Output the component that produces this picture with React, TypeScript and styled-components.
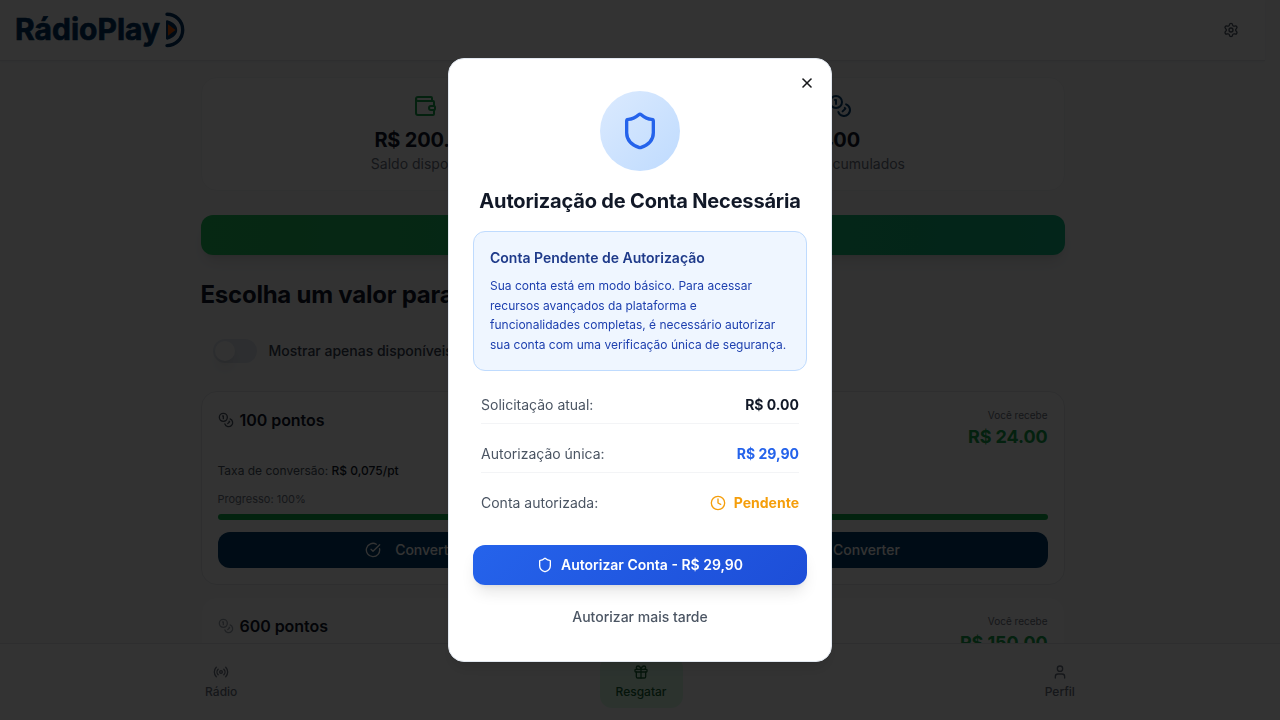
import React from "react";
import styled, { createGlobalStyle } from "styled-components";
import {
  CircleCheckBig,
  Clock,
  Coins,
  Gift,
  Radio,
  Settings,
  Shield,
  User,
  Wallet,
  X,
} from "lucide-react";

const GlobalStyle = createGlobalStyle`
  *, *::before, *::after { box-sizing: border-box; }
  html, body { margin: 0; height: 100%; overflow: hidden; }
  body {
    background: #f9fafb;
    color: #0f172a;
    font-family: Inter, "Liberation Sans", sans-serif;
    font-size: 14px;
    line-height: 20px;
  }
  h1, h2, h3, p { margin: 0; }
  button { font: inherit; border: 0; padding: 0; background: none; color: inherit; cursor: pointer; }
  svg { flex-shrink: 0; }
`;

const Page = styled.div`
  height: 720px;
  overflow: hidden;
  padding-right: 15px;
`;

const Header = styled.header`
  display: flex;
  align-items: center;
  justify-content: space-between;
  height: 61px;
  padding: 0 26px 0 16px;
  background: #fff;
  border-bottom: 1px solid #e5e7eb;
  box-shadow: 0 1px 2px rgba(0, 0, 0, 0.05);
`;

const IconButton = styled.button`
  display: flex;
  padding: 0;
  color: #4b5563;
`;

const Main = styled.main`
  display: flex;
  flex-direction: column;
  max-width: 896px;
  margin: 0 auto;
  padding: 16px;
`;

const Summary = styled.section`
  display: grid;
  grid-template-columns: 1fr 1fr;
  padding: 16px;
  background: #fff;
  border: 1px solid #f1f3f5;
  border-radius: 16px;
`;

const Stat = styled.div<{ $tone: string }>`
  display: flex;
  flex-direction: column;
  align-items: center;
  color: #6b7280;
  svg {
    color: ${(p) => p.$tone};
    margin-bottom: 8px;
  }
  strong {
    font-size: 20px;
    line-height: 28px;
    font-weight: 700;
    letter-spacing: -0.01em;
    color: #0f172a;
  }
`;

const WithdrawButton = styled.button`
  height: 40px;
  margin-top: 24px;
  border-radius: 12px;
  background: linear-gradient(to right, #22c55e, #10b981);
  box-shadow: 0 10px 15px -3px rgba(0, 0, 0, 0.1), 0 4px 6px -4px rgba(0, 0, 0, 0.1);
  color: #fff;
  font-weight: 600;
`;

const SectionTitle = styled.h2`
  margin-top: 24px;
  font-size: 24px;
  line-height: 32px;
  font-weight: 700;
  letter-spacing: -0.01em;
`;

const FilterRow = styled.label`
  display: flex;
  align-items: center;
  gap: 12px;
  margin: 16px 0;
  padding: 12px;
  font-weight: 500;
  color: #374151;
`;

const Track = styled.span`
  display: flex;
  width: 44px;
  height: 24px;
  padding: 2px;
  border-radius: 12px;
  background: #dfe5ee;
`;

const Knob = styled.span`
  width: 20px;
  height: 20px;
  border-radius: 50%;
  background: #f9fafb;
  box-shadow: 0 10px 15px -3px rgba(0, 0, 0, 0.1), 0 4px 6px -4px rgba(0, 0, 0, 0.1);
`;

const CardList = styled.div`
  display: flex;
  flex-direction: column;
  gap: 12px;
`;

const Card = styled.article<{ $muted?: boolean }>`
  padding: 16px;
  border: 1px solid ${(p) => (p.$muted ? "#f8f9fa" : "#e5e7eb")};
  border-radius: 16px;
  background: #fff;
`;

const CardTop = styled.div`
  display: flex;
  justify-content: space-between;
  align-items: flex-start;
`;

const Points = styled.h3<{ $muted?: boolean }>`
  display: flex;
  align-items: center;
  gap: 6px;
  font-size: 16px;
  line-height: 24px;
  font-weight: 600;
  letter-spacing: -0.05px;
  svg {
    color: ${(p) => (p.$muted ? "#9ca3af" : "#4b5563")};
  }
`;

const Receive = styled.div`
  text-align: right;
  small {
    display: block;
    font-size: 10px;
    line-height: 15px;
    color: #6b7280;
  }
  strong {
    display: block;
    font-size: 18px;
    line-height: 28px;
    font-weight: 700;
    letter-spacing: -0.1px;
    color: #16a34a;
  }
`;

const Rate = styled.p`
  margin-top: 12px;
  font-size: 12px;
  line-height: 16px;
  color: #4b5563;
  b {
    font-weight: 500;
    color: #0f172a;
  }
`;

const ProgressLabel = styled.p`
  margin: 12px 0 6px;
  font-size: 11px;
  line-height: 17px;
  color: #6b7280;
`;

const ProgressBar = styled.div`
  height: 6px;
  border-radius: 3px;
  background: #12b04e;
`;

const ConvertButton = styled.button`
  display: flex;
  align-items: center;
  justify-content: center;
  width: 100%;
  height: 36px;
  margin-top: 12px;
  border-radius: 12px;
  background: #003d6e;
  color: #fff;
  font-weight: 500;
  svg {
    margin-right: 14px;
  }
  span + span {
    margin-left: 371px;
  }
`;

const BottomNav = styled.nav`
  position: fixed;
  inset: auto 0 0 0;
  display: flex;
  justify-content: space-around;
  padding: 12px 16px;
  border-top: 1px solid #e5e7eb;
  background: #fff;
`;

const NavItem = styled.a<{ $active?: boolean }>`
  display: flex;
  flex-direction: column;
  align-items: center;
  gap: 4px;
  padding: 8px 16px;
  border-radius: 12px;
  font-size: 12px;
  line-height: 16px;
  font-weight: 500;
  color: ${(p) => (p.$active ? "#166534" : "#6b7280")};
  background: ${(p) => (p.$active ? "#dcfce7" : "transparent")};
`;

const Overlay = styled.div`
  position: fixed;
  inset: 0;
  display: flex;
  align-items: center;
  justify-content: center;
  background: rgba(0, 0, 0, 0.8);
`;

const Dialog = styled.section`
  position: relative;
  display: flex;
  flex-direction: column;
  width: 384px;
  padding: 32px 24px 24px;
  border: 1px solid #e2e8f0;
  border-radius: 16px;
  background: #fff;
  box-shadow: 0 10px 15px -3px rgba(0, 0, 0, 0.1), 0 4px 6px -4px rgba(0, 0, 0, 0.1);
`;

const CloseButton = styled.button`
  position: absolute;
  top: 16px;
  right: 16px;
  display: flex;
  color: #18191c;
`;

const Emblem = styled.div`
  display: grid;
  place-items: center;
  align-self: center;
  width: 80px;
  height: 80px;
  border-radius: 50%;
  background: linear-gradient(135deg, #dbeafe, #bfdbfe);
  color: #2563eb;
`;

const DialogTitle = styled.h1`
  margin: 16px 0;
  font-size: 20px;
  line-height: 28px;
  font-weight: 700;
  letter-spacing: -0.18px;
  text-align: center;
  color: #111827;
  white-space: nowrap;
`;

const Notice = styled.div`
  padding: 16px;
  border: 1px solid #bfdbfe;
  border-radius: 12px;
  background: #eff6ff;
  h2 {
    margin-bottom: 8px;
    font-size: 14px;
    line-height: 20px;
    font-weight: 600;
    color: #1e3a8a;
  }
  p {
    font-size: 12px;
    line-height: 19.5px;
    color: #1e40af;
  }
`;

const Details = styled.dl`
  display: flex;
  flex-direction: column;
  gap: 12px;
  margin: 16px 0 24px;
  padding: 0 8px;
`;

const DetailRow = styled.div`
  display: flex;
  justify-content: space-between;
  padding: 8px 0;
  color: #4b5563;
  &:not(:last-child) {
    border-bottom: 1px solid #f3f4f6;
  }
`;

const DetailValue = styled.dd<{ $tone: string }>`
  display: flex;
  align-items: center;
  gap: 8px;
  margin: 0;
  font-weight: 700;
  color: ${(p) => p.$tone};
`;

const AuthorizeButton = styled.button`
  display: flex;
  align-items: center;
  justify-content: center;
  gap: 8px;
  height: 40px;
  border-radius: 12px;
  background: linear-gradient(135deg, #2563eb, #1d4ed8);
  box-shadow: 0 10px 15px -3px rgba(0, 0, 0, 0.1), 0 4px 6px -4px rgba(0, 0, 0, 0.1);
  color: #fff;
  font-weight: 600;
`;

const LaterButton = styled.button`
  height: 40px;
  margin-top: 12px;
  font-weight: 500;
  color: #4b5563;
`;

function Logo() {
  return (
    <svg width="170" height="40" viewBox="0 0 170 40" aria-label="RádioPlay">
      <text
        x="-1"
        y="29.6"
        fontFamily="Inter, sans-serif"
        fontSize="30.5"
        fontWeight="700"
        fill="#003566"
        stroke="#003566"
        strokeWidth="0.7"
        textLength="145"
        lengthAdjust="spacingAndGlyphs"
      >
        RádioPlay
      </text>
      <path
        d="M151 4.200a15.700 15.700 0 0 1 0 31.400"
        fill="none"
        stroke="#003566"
        strokeWidth="3.4"
        strokeLinecap="round"
      />
      <path
        d="M150 11.500c0-1 1-1.500 2-1C158 12.500 161.200 16 161.200 20s-3.200 7.500-9.200 9.500c-1 .5-2 0-2-1z"
        fill="#003566"
      />
      <path d="M152 14.200l7.500 5.800-7.500 5.800z" fill="#e65500" />
    </svg>
  );
}

export default function App() {
  return (
    <>
      <GlobalStyle />
      <Page>
        <Header>
          <Logo />
          <IconButton aria-label="Configurações">
            <Settings size={16} />
          </IconButton>
        </Header>
        <Main>
          <Summary>
            <Stat $tone="#16a34a">
              <Wallet size={24} />
              <strong>R$ 200.00</strong>
              <span>Saldo disponível</span>
            </Stat>
            <Stat $tone="#003d6e">
              <Coins size={24} />
              <strong>400</strong>
              <span>Pontos acumulados</span>
            </Stat>
          </Summary>
          <WithdrawButton>Sacar</WithdrawButton>
          <SectionTitle>Escolha um valor para converter</SectionTitle>
          <FilterRow>
            <Track>
              <Knob />
            </Track>
            Mostrar apenas disponíveis
          </FilterRow>
          <CardList>
            <Card>
              <CardTop>
                <Points>
                  <Coins size={16} />
                  100 pontos
                </Points>
                <Receive>
                  <small>Você recebe</small>
                  <strong>R$ 24.00</strong>
                </Receive>
              </CardTop>
              <Rate>
                Taxa de conversão: <b>R$ 0,075/pt</b>
              </Rate>
              <ProgressLabel>Progresso: 100%</ProgressLabel>
              <ProgressBar />
              <ConvertButton>
                <CircleCheckBig size={16} />
                <span>Converter</span>
                <span>Converter</span>
              </ConvertButton>
            </Card>
            <Card $muted>
              <CardTop>
                <Points $muted>
                  <Coins size={16} />
                  600 pontos
                </Points>
                <Receive>
                  <small>Você recebe</small>
                  <strong>R$ 150.00</strong>
                </Receive>
              </CardTop>
            </Card>
          </CardList>
        </Main>
      </Page>
      <BottomNav>
        <NavItem>
          <Radio size={16} />
          Rádio
        </NavItem>
        <NavItem $active>
          <Gift size={16} />
          Resgatar
        </NavItem>
        <NavItem>
          <User size={16} />
          Perfil
        </NavItem>
      </BottomNav>
      <Overlay>
        <Dialog role="dialog" aria-modal="true">
          <Emblem>
            <Shield size={40} />
          </Emblem>
          <DialogTitle>Autorização de Conta Necessária</DialogTitle>
          <Notice>
            <h2>Conta Pendente de Autorização</h2>
            <p>
              Sua conta está em modo básico. Para acessar recursos avançados da plataforma e
              <br />
              funcionalidades completas, é necessário autorizar sua conta com uma verificação única
              de segurança.
            </p>
          </Notice>
          <Details>
            <DetailRow>
              <dt>Solicitação atual:</dt>
              <DetailValue $tone="#111827">R$ 0.00</DetailValue>
            </DetailRow>
            <DetailRow>
              <dt>Autorização única:</dt>
              <DetailValue $tone="#2563eb">R$ 29,90</DetailValue>
            </DetailRow>
            <DetailRow>
              <dt>Conta autorizada:</dt>
              <DetailValue $tone="#f59e0b">
                <Clock size={16} />
                Pendente
              </DetailValue>
            </DetailRow>
          </Details>
          <AuthorizeButton>
            <Shield size={16} />
            Autorizar Conta - R$ 29,90
          </AuthorizeButton>
          <LaterButton>Autorizar mais tarde</LaterButton>
          <CloseButton aria-label="Fechar">
            <X size={16} strokeWidth={2.4} />
          </CloseButton>
        </Dialog>
      </Overlay>
    </>
  );
}
